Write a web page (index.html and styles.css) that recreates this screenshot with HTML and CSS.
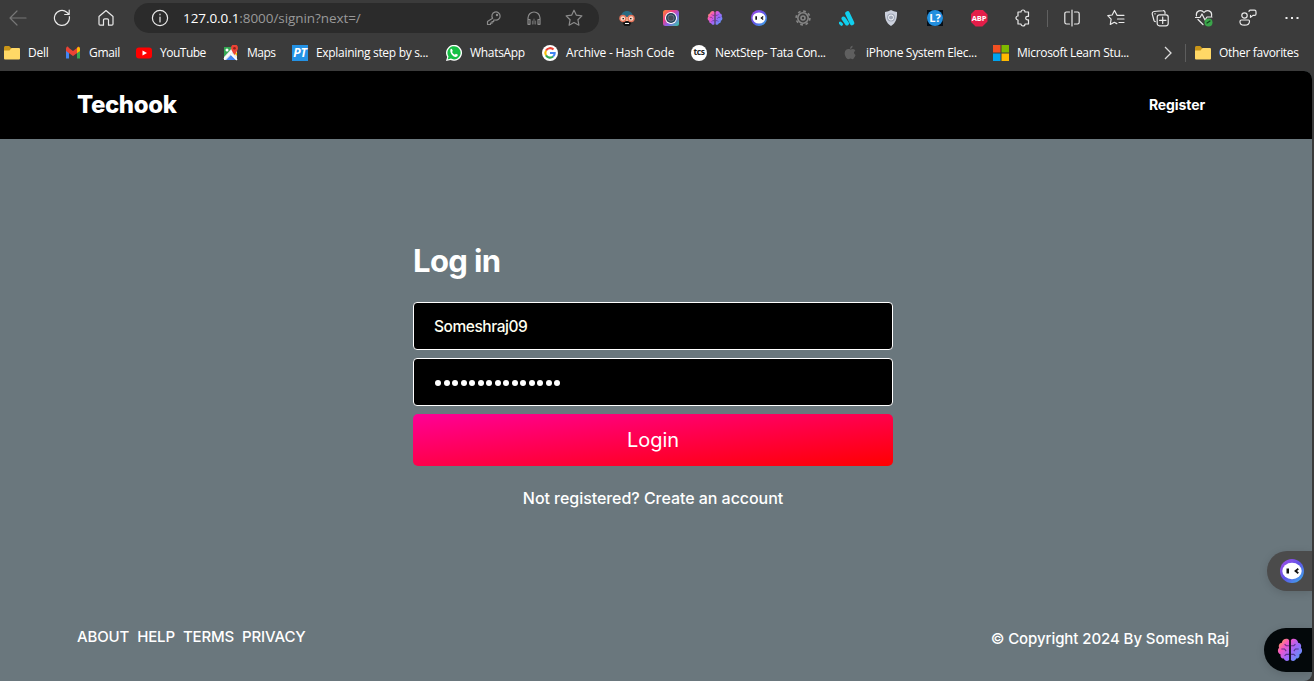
FILE: index.html
```html
<!DOCTYPE html>
<html lang="en">
<head>
<meta charset="utf-8">
<title>Techook</title>
<link rel="stylesheet" href="styles.css">
</head>
<body>
<svg class="defs" aria-hidden="true">
  <defs>
    <linearGradient id="brainFill" x1="0" y1="0" x2="24" y2="20" gradientUnits="userSpaceOnUse"><stop offset=".1" stop-color="#ffa04a"/><stop offset=".35" stop-color="#f455c8"/><stop offset=".6" stop-color="#a366fa"/><stop offset="1" stop-color="#4a9ff5"/></linearGradient>
    <linearGradient id="botRing" x1="0" y1="0" x2="1" y2="1"><stop offset="0" stop-color="#a94be8"/><stop offset=".5" stop-color="#5f55e8"/><stop offset="1" stop-color="#37b6ea"/></linearGradient>
    <linearGradient id="lensFill" x1="0" y1="0" x2="1" y2="1"><stop offset="0" stop-color="#ff8a2b"/><stop offset=".35" stop-color="#ee3e87"/><stop offset=".6" stop-color="#8a62e8"/><stop offset="1" stop-color="#31d0a2"/></linearGradient>
  </defs>
  <symbol id="brain" viewBox="0 0 24 24">
    <path fill="url(#brainFill)" d="M11.200 3v18.200c-1.300 1.500-4.300 1.200-4.900-1.300-2.300.2-3.600-1.900-2.900-3.700C.7 15.400 0 11.700 2 10 1 7.500 2.300 5.400 4.500 5.200 4.800 1.700 9.600.3 11.200 3zM12.800 3v18.200c1.300 1.500 4.300 1.200 4.900-1.300 2.300.2 3.600-1.900 2.900-3.700 2.700-.8 3.400-4.500 1.400-6.200 1-2.500-.3-4.600-2.500-4.800C19.200 1.700 14.400.3 12.800 3z"/>
    <path fill="none" stroke="#3a236b" stroke-opacity=".75" stroke-width="1" d="M11 8H8.500L7 6.500M4 11h3l1.500 2M11 16H8.500l-1.500 1.500M13 8h2.500L17 6.500M20 11h-3l-1.500 2M13 16h2.500l1.500 1.500"/>
  </symbol>
  <symbol id="bot" viewBox="0 0 24 24">
    <circle cx="12" cy="12" r="12" fill="url(#botRing)"/><ellipse cx="12" cy="12" rx="9.700" ry="8.300" fill="#fff"/>
    <path d="M6.500 9.500h2.500v5H6.500z" fill="#111"/><path d="M18.300 9.800 15.500 12l2.800 2.200" fill="none" stroke="#111" stroke-width="1.800"/>
  </symbol>
  <symbol id="folder" viewBox="0 0 16 16"><path fill="#c99518" d="M0 2.500Q0 1 1.200 1h4L7 3v3H0z"/><path fill="#ffd866" d="M0 5.500h5.500L7.500 3H15q1 0 1 1v9.500q0 1-1 1H1q-1 0-1-1z"/></symbol>
</svg>

<header class="browser">
  <div class="toolbar">
    <span class="tool dim"><svg class="i18" viewBox="0 0 18 18"><path d="M17 9H1M8 2 1 9l7 7"/></svg></span>
    <span class="tool"><svg class="i18" viewBox="0 0 18 18"><path d="M16.300 7.500A7.500 7.500 0 1 1 13.800 3.200L16 5.200M16.200 1v4.500h-4.500"/></svg></span>
    <span class="tool"><svg class="i18" viewBox="0 0 18 18"><path d="M2 7.500 9 1.500l7 6V15q0 1.200-1.200 1.200H11.500V11q0-1.200-1.200-1.200H7.700Q6.500 9.800 6.500 11v5.200H3.200Q2 16.200 2 15z"/></svg></span>
    <div class="address">
      <svg class="i18 info" viewBox="0 0 18 18"><circle cx="9" cy="9" r="7.600"/><path d="M9 8v5M9 5v.8"/></svg>
      <span class="url"><b>127.0.0.1</b>:8000/signin?next=/</span>
      <span class="field-icons">
        <svg class="i16" viewBox="0 0 16 16"><path d="M6.600 8.300A4.100 4.100 0 1 1 9 10H7.700v1.600H6v1.600H4.500v1.300H1.500v-3z"/><circle cx="11" cy="5" r=".6"/></svg>
        <svg class="i16" viewBox="0 0 16 16"><path d="M2 14V8a6 6 0 0 1 12 0v6M2 9.500h2v4.800H2zM14 9.500h-2v4.800h2z"/><path d="M6.500 11v3M8 9v5M9.500 11v3" opacity=".6"/></svg>
        <svg class="i18" viewBox="0 0 18 18"><path d="m9 1.200 2.400 5 5.500.7-4 3.800 1 5.500L9 13.500l-4.900 2.700 1-5.500-4-3.800 5.500-.7z"/></svg>
      </span>
    </div>
    <div class="extensions">
      <span class="tool"><svg class="logo" viewBox="0 0 16 16"><path fill="#286a82" d="M2 7C2-1 14-1 14 7z"/><path fill="#f3bd9b" d="M2.500 7h11v3l-2 4h-7l-2-4z"/><path fill="#151515" d="M3.500 11h9v2l-2 3h-5l-2-3z"/><circle cx="3.900" cy="8.500" r="3" fill="#f8d5c4" stroke="#e3745a" stroke-width="1.300"/><circle cx="12.100" cy="8.500" r="3" fill="#f8d5c4" stroke="#e3745a" stroke-width="1.300"/><path fill="#222" d="M3.500 8H5v1.300H3.500zM11 8h1.500v1.300H11z"/><path fill="#fff" d="M6 13h4v1H6z"/></svg></span>
      <span class="tool"><svg class="logo" viewBox="0 0 16 16"><rect width="16" height="16" rx="2.500" fill="url(#lensFill)"/><circle cx="8" cy="8" r="6" fill="#fff"/><circle cx="8" cy="8" r="5" fill="#203e55"/><circle cx="8" cy="8" r="3.200" fill="#454b55" stroke="#8394a2" stroke-width=".6"/></svg></span>
      <span class="tool"><svg class="logo"><use href="#brain"/></svg></span>
      <span class="tool"><svg class="logo"><use href="#bot"/></svg></span>
      <span class="tool"><svg class="logo gear" viewBox="0 0 16 16"><circle cx="8" cy="8" r="6.900" stroke-dasharray="2.700 2.719"/><circle cx="8" cy="8" r="5.200"/><circle cx="8" cy="8" r="2"/></svg></span>
      <span class="tool"><svg class="logo" viewBox="0 0 16 16" fill="none" stroke="#11cfee" stroke-linecap="round"><path stroke-width="4.600" d="M8.500 3.500 13 13"/><path stroke-width="4" d="M4.500 8.500 8 13.500"/><path stroke-width="3" d="M1.200 13 2.500 14.300"/></svg></span>
      <span class="tool"><svg class="logo" viewBox="0 0 16 16"><path fill="#cbd0dc" d="M2 2q3.500-.5 6-2 2.500 1.500 6 2c.3 6-1 11-6 14C3 13 1.700 8 2 2z"/><circle cx="8" cy="7.500" r="4" fill="#a2a9b8"/><circle cx="8" cy="7.500" r="2.500" fill="none" stroke="#f2f4f8"/></svg></span>
      <span class="tool"><span class="quiz"><i>L?</i></span></span>
      <span class="tool"><span class="abp">ABP</span></span>
      <span class="tool"><svg class="i18" viewBox="0 0 18 18"><path d="M4 3h3a2 2 0 0 1 4 0h3.500v4.300h-1a1.800 1.800 0 0 0 0 3.600h1V15H11a2 2 0 0 1-4 0H4v-4a2 2 0 0 1 0-4z"/></svg></span>
    </div>
    <span class="rule"></span>
    <div class="actions">
      <span class="tool"><svg class="i18" viewBox="0 0 18 18"><path d="M6.500 3H3.500Q1.800 3 1.800 4.700v8.600Q1.800 15 3.500 15h3M11.500 3h3q1.700 0 1.700 1.700v8.600q0 1.700-1.700 1.700h-3M9 1v16"/></svg></span>
      <span class="tool"><svg class="i18" viewBox="0 0 18 18"><path d="M11 6.300H10L7.500 1.500 5.200 6l-4.400.7 3.300 3.500-.8 5.300 4-2.200 2.500 1.300M11.500 6.300h5.500M10.500 10h6.500M12 13.500h5"/></svg></span>
      <span class="tool"><svg class="i18" viewBox="0 0 18 18"><path d="M14 4.500V3.200Q13.700 1.500 12 1.700L3 2.500Q1 3 1.200 4.800L3 11.500q.3 1 1.300 1.200M4 5v-.5"/><rect x="6.200" y="5.800" width="11" height="11" rx="2.200"/><path d="M11.700 8v6.500M8.500 11.300H15"/></svg></span>
      <span class="tool"><svg class="i18" viewBox="0 0 18 18"><path d="M1.500 7C.5 1.500 6.500 0 9 3.500c2.500-3.500 8.500-2 7.500 3.500M3 10.500l5 5M.5 8.500H5L7 5l3 6 2-3h5"/><circle cx="13.500" cy="13.500" r="4" fill="#3ba64b" stroke="none"/><path stroke="#123f1a" d="m12 14 3-2"/></svg></span>
      <span class="tool"><svg class="i18" viewBox="0 0 18 18"><circle cx="5.500" cy="6.500" r="2.700"/><path d="M2.500 11h7q1 0 1 1.200 0 4-5 4t-4.500-4q0-1.200 1.500-1.200zM10 2.500q0-1.300 1.300-1.300h4.200q1.500 0 1.500 1.500v2.200q0 1.500-1.500 1.500H14l-2.500 2V6.400"/></svg></span>
      <span class="tool"><svg class="i18" viewBox="0 0 18 18"><path class="dots" d="M2.500 8h2v2h-2zM8 8h2v2H8zM13.500 8h2v2h-2z"/></svg></span>
    </div>
  </div>

  <nav class="bookmarks">
    <a><svg class="logo"><use href="#folder"/></svg><span>Dell</span></a>
    <a><svg class="logo" viewBox="0 0 16 16"><path fill="#4285f4" d="M1 4.500 4 7v6.500H1z"/><path fill="#34a853" d="M12 7l3-2.500v9h-3z"/><path fill="#ea4335" d="M1 3.500Q2-.1 4 3l4 3 4-3q2-3.100 3 .5V6L8 11 1 6z"/><path fill="#fbbc04" d="M12 3q2-2 3 .5V6l-3 2z"/></svg><span class="tight">Gmail</span></a>
    <a><svg class="logo" viewBox="0 0 16 16"><rect y="2.500" width="16" height="11" rx="3" fill="#f00"/><path fill="#fff" d="m6.500 5.500 4.500 2.500-4.500 2.500z"/></svg><span class="tighter">YouTube</span></a>
    <a><svg class="logo" viewBox="0 0 16 16"><path fill="#e8eaed" d="M1 2h13v13H1z"/><path fill="#34a853" d="M1 2h9L1 12z"/><path fill="#fbbc04" d="M10 7l4 4V8l-3-2z"/><path fill="#4285f4" d="m3 15 5-5 5 5z"/><path stroke="#fff" stroke-width="1.500" d="M1 14 13 2M8 9l6 6"/><circle cx="4" cy="5" r="1.500" fill="#fff"/><path fill="#ea4335" d="M11.500 10Q8 5 8 3a3.500 3.500 0 0 1 7 0q0 2-3.500 7z"/><circle cx="11.500" cy="3.200" r="1.300" fill="#8e211b"/></svg><span class="tighter">Maps</span></a>
    <a><span class="pt">PT</span><span class="tight">Explaining step by s...</span></a>
    <a><svg class="logo" viewBox="0 0 16 16"><path fill="#fff" d="M0 16 1.200 12A8 8 0 1 1 4.500 15z"/><path fill="#17bf45" d="m1.600 14.400.9-3a6.600 6.600 0 1 1 2.400 2.200z"/><path fill="#fff" d="M4.500 4.200q1.300-1 1.900.8l.4 1-.8 1q1 2 2.900 2.700l1-1 2 1.100q0 2-2.100 2.100C6.500 11.700 3.500 7.500 4.500 4.200z"/></svg><span class="tight">WhatsApp</span></a>
    <a><svg class="logo" viewBox="0 0 16 16"><circle cx="8" cy="8" r="8" fill="#fff"/><g fill="none" stroke-width="2.100"><path stroke="#ea4335" d="M11.500 4.600A4.700 4.700 0 0 0 4 5.600"/><path stroke="#fbbc04" d="M4 5.600a4.700 4.700 0 0 0 0 4.800"/><path stroke="#34a853" d="M4 10.400a4.700 4.700 0 0 0 7.100 1.100"/><path stroke="#4285f4" d="M11.100 11.500q1.700-1.400 1.600-3.500H8"/></g></svg><span>Archive - Hash Code</span></a>
    <a><span class="tcs">tcs</span><span class="tight">NextStep- Tata Con...</span></a>
    <a><svg class="logo apple" viewBox="0 0 16 16"><path fill="#696969" d="M8.500 4.500q4-1.500 4.800 1.200-2.800 2 .3 4.300-2 5-3.600 4-1.500-.9-3 0C5 15 2.500 11 2.700 8c.2-3.600 3-4.600 5.800-3.500zM8 4q0-2.800 2.600-3.200Q10.800 3.500 8 4z"/></svg><span class="tight">iPhone System Elec...</span></a>
    <a><svg class="logo" viewBox="0 0 16 16"><path fill="#f25022" d="M0 0h7.500v7.500H0z"/><path fill="#7fba00" d="M8.500 0H16v7.500H8.500z"/><path fill="#00a4ef" d="M0 8.500h7.500V16H0z"/><path fill="#ffb900" d="M8.500 8.500H16V16H8.500z"/></svg><span class="tight">Microsoft Learn Stu...</span></a>
    <svg class="chevron" viewBox="0 0 8 14"><path d="m1 1 6 6-6 6"/></svg>
    <a class="other"><svg class="logo"><use href="#folder"/></svg><span class="tight">Other favorites</span></a>
  </nav>
</header>

<div class="viewport">
  <div class="page">
    <header class="site-header"><a class="brand">Techook</a><a class="register">Register</a></header>
    <main>
      <form class="login">
        <h1>Log in</h1>
        <div class="field">Someshraj09</div>
        <div class="field"><span class="password"><i></i><i></i><i></i><i></i><i></i><i></i><i></i><i></i><i></i><i></i><i></i><i></i><i></i><i></i><i></i></span></div>
        <button type="button">Login</button>
        <p>Not registered? Create an account</p>
      </form>
    </main>
    <footer>
      <nav><a>ABOUT</a><a>HELP</a><a>TERMS</a><a>PRIVACY</a></nav>
      <span class="copy">© Copyright 2024 By Somesh Raj</span>
    </footer>
  </div>
  <div class="float bot"><svg><use href="#bot"/></svg></div>
  <div class="float mind"><svg><use href="#brain"/></svg></div>
</div>
</body>
</html>
```
FILE: styles.css
```css
* { box-sizing: border-box; }
body { margin: 0; width: 1314px; height: 681px; overflow: hidden; background: #3b3b3b; font-family: Inter, "Liberation Sans", sans-serif; color: #fff; display: flex; flex-direction: column; }
.defs { position: absolute; width: 0; height: 0; }

/* Browser chrome */
.browser { height: 71px; flex: none; font-family: "Open Sans", "Noto Sans", sans-serif; }
.toolbar { height: 36px; display: flex; align-items: center; margin-left: -4px; }
.tool { width: 44px; height: 36px; flex: none; display: flex; align-items: center; justify-content: center; }
.i18, .i16 { width: 18px; height: 18px; fill: none; stroke: #e9e9e9; stroke-width: 1.2; stroke-linejoin: round; stroke-linecap: round; flex: none; }
.i16 { width: 16px; height: 16px; }
.dim svg { stroke: #777; }
.logo { width: 16px; height: 16px; flex: none; display: block; }
.gear { fill: none; stroke: #858585; stroke-width: 1.6; }
.i18 .dots { fill: #eee; stroke: none; }
.address { width: 465px; height: 30px; margin: 0 6px; border-radius: 15px; background: #2b2b2b; display: flex; align-items: center; padding: 0 16px 0 17px; }
.url { margin-left: 14px; padding-bottom: 1px; font-size: 13.5px; letter-spacing: -.07px; color: #999; white-space: nowrap; }
.url b { font-weight: 500; color: #fff; }
.field-icons { margin-left: auto; display: flex; align-items: center; gap: 24px; }
.field-icons svg { stroke: #8b8b8b; }
.field-icons svg:last-child { margin-left: -1px; }
.extensions, .actions { display: flex; }
.rule { width: 1px; height: 17px; background: #606060; margin: 0 2px; }
.quiz { width: 16px; height: 16px; background: #071019; display: flex; }
.quiz i { width: 16px; height: 16px; border-radius: 50%; background: #238fde; font: 700 11px/16px "Open Sans", sans-serif; text-align: center; }
.abp { width: 17px; height: 17px; clip-path: polygon(30% 0, 70% 0, 100% 30%, 100% 70%, 70% 100%, 30% 100%, 0 70%, 0 30%); background: #e41e49; font: 700 7.5px/17px "Open Sans", sans-serif; letter-spacing: -.2px; text-align: center; }

.bookmarks { height: 34px; display: grid; grid-template-columns: 61px 71px 87px 69px 154px 96px 149px 151px 151px 168px 24px 1fr; align-items: center; padding-left: 4px; font-size: 12px; white-space: nowrap; }
.bookmarks a { display: flex; gap: 8px; align-items: center; height: 18px; letter-spacing: -.2px; }
.bookmarks a > span:last-child { position: relative; top: -.5px; }
.bookmarks .tight { letter-spacing: -.31px; }
.bookmarks .tighter { letter-spacing: -.5px; }
.apple { opacity: .8; }
.chevron { width: 8px; height: 14px; fill: none; stroke: #ddd; stroke-width: 1.3; margin-left: 3px; }
.bookmarks .other { border-left: 1px solid #5d5d5d; padding-left: 9px; }
.pt { width: 16px; height: 16px; background: #2492e5; font: italic 700 12px/16px "Open Sans", sans-serif; text-align: center; }
.tcs { width: 16px; height: 16px; border-radius: 50%; background: #fff; color: #222; font: 700 8.5px/14px "Open Sans", sans-serif; letter-spacing: -.5px; text-align: center; }

/* Page */
.viewport { position: relative; width: 1312px; height: 610px; }
.page { height: 100%; background: #6a777d; border-radius: 0 8px 8px 0; overflow: hidden; display: flex; flex-direction: column; }
.site-header { height: 68px; flex: none; background: #000; display: flex; align-items: center; justify-content: space-between; padding: 0 107px 2px 77px; }
.brand { font-size: 24px; font-weight: 800; letter-spacing: -.4px; }
.register { font-size: 14px; font-weight: 700; letter-spacing: -.1px; }
.login { width: 480px; margin: 101px 0 0 413px; display: flex; flex-direction: column; gap: 8px; }
h1 { margin: 0 0 12px; font-size: 31px; line-height: 42px; font-weight: 700; letter-spacing: -.6px; }
.field { height: 48px; border: 1px solid #fff; border-radius: 4px; background: #000; padding: 0 20px; display: flex; align-items: center; font-size: 15.5px; font-weight: 500; letter-spacing: -.45px; color: #fffff0; }
.password { display: flex; gap: 2.5px; margin: 1px 0 0 1px; }
.password i { width: 6px; height: 6px; border-radius: 50%; background: #fff; }
button { height: 52px; border: 0; border-radius: 5px; background: linear-gradient(to bottom right, #ff0096, #f00); color: #fff; font: 400 20px Inter, sans-serif; padding: 0; }
.login p { margin: 13px 0 0; font-size: 16px; line-height: 22px; font-weight: 500; text-align: center; letter-spacing: -.05px; }
footer { margin: auto 83px 33px 77px; display: flex; justify-content: space-between; align-items: center; font-size: 15px; font-weight: 500; line-height: 22px; }
footer nav { display: flex; gap: 8px; letter-spacing: -.15px; }
.copy { letter-spacing: -.08px; padding-top: 2px; margin-bottom: -2px; }
.float { position: absolute; right: 0; display: flex; align-items: center; }
.bot { top: 480px; width: 45px; height: 40px; border-radius: 20px 0 0 20px; background: #4b4b4b; padding-left: 13px; box-shadow: 0 2px 8px #0002; }
.bot svg { width: 24px; height: 24px; }
.mind { top: 557px; width: 48px; height: 44px; border-radius: 22px 0 0 22px; background: #03080a; padding-left: 13px; box-shadow: 0 2px 8px #0002; }
.mind svg { width: 26px; height: 26px; }
```
